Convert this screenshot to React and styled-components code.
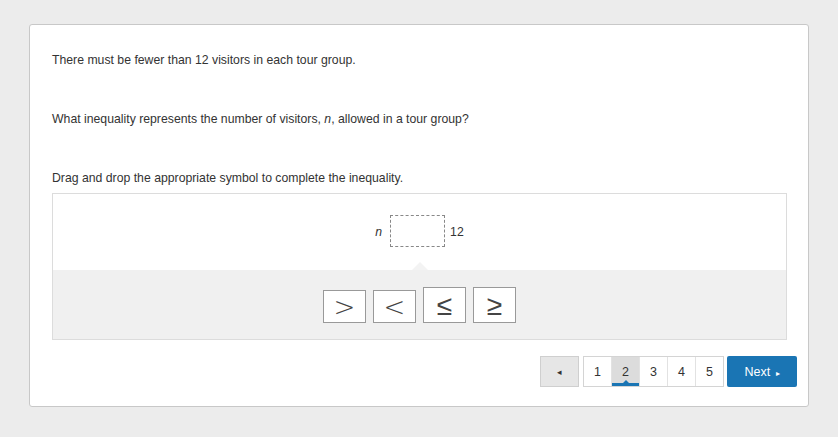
import React, { useState } from 'react';
import styled, { createGlobalStyle } from 'styled-components';

const GlobalStyle = createGlobalStyle`
  html, body {
    margin: 0;
    padding: 0;
    background: #ececec;
  }
  body {
    font-family: "Liberation Sans", Arial, sans-serif;
    color: #333;
  }
`;

const symbols = ['>', '<', '≤', '≥'];
const pages = [1, 2, 3, 4, 5];

const App = () => {
  const [page, setPage] = useState(2);

  return (
    <Page>
      <GlobalStyle />
      <Card>
        <Prompt>There must be fewer than 12 visitors in each tour group.</Prompt>
        <Prompt>
          What inequality represents the number of visitors, <em>n</em>, allowed in a tour group?
        </Prompt>
        <Prompt>Drag and drop the appropriate symbol to complete the inequality.</Prompt>

        <Widget>
          <Expression>
            <Var>n</Var>
            <DropZone />
            <Num>12</Num>
          </Expression>
          <Tray>
            {symbols.map((s) => (
              <Tile key={s} tall={s === '≤' || s === '≥'}>{s}</Tile>
            ))}
          </Tray>
        </Widget>

        <Pager>
          <PrevButton>◂</PrevButton>
          <PageList>
            {pages.map((p) => (
              <PageItem key={p} active={p === page} onClick={() => setPage(p)}>
                {p}
              </PageItem>
            ))}
          </PageList>
          <NextButton>Next <small>▸</small></NextButton>
        </Pager>
      </Card>
    </Page>
  );
};

// Styles
const Page = styled.div`
  padding: 24px 29px 30px 29px;
`;

const Card = styled.div`
  background: white;
  border: 1px solid #c8c8c8;
  border-radius: 3px;
  padding: 26px 11px 19px 22px;
  display: flex;
  flex-direction: column;
`;

const Prompt = styled.p`
  margin: 0 0 41px 0;
  font-size: 12.25px;
  line-height: 18px;
  color: #333;

  &:nth-of-type(3) {
    margin-bottom: 6px;
  }
`;

const Widget = styled.div`
  border: 1px solid #dcdcdc;
  margin-right: 10px;
  display: flex;
  flex-direction: column;
`;

const Expression = styled.div`
  height: 76px;
  display: flex;
  justify-content: center;
  align-items: flex-start;
  padding-top: 21px;
  box-sizing: border-box;
  gap: 5px;
  font-size: 12.25px;
  line-height: 35px;
  color: #333;
`;

const Var = styled.span`
  font-style: italic;
  margin-right: 3px;
`;

const Num = styled.span``;

const DropZone = styled.div`
  width: 53px;
  height: 30px;
  border: 1px dashed #888;
`;

const Tray = styled.div`
  position: relative;
  background: #f0f0f0;
  display: flex;
  justify-content: center;
  align-items: flex-end;
  gap: 7px;
  padding: 17px 0 16px 0;

  &::before {
    content: '';
    position: absolute;
    top: -8px;
    left: 50%;
    margin-left: -8px;
    border-left: 8px solid transparent;
    border-right: 8px solid transparent;
    border-bottom: 8px solid #f3f3f3;
  }
`;

const Tile = styled.div`
  width: 41px;
  height: ${(props) => (props.tall ? '34px' : '31px')};
  border: 1px solid #999;
  background: white;
  display: flex;
  justify-content: center;
  align-items: center;
  font-family: "DejaVu Sans", sans-serif;
  font-size: ${(props) => (props.tall ? '28px' : '26px')};
  font-weight: 200;
  color: #444;
  cursor: grab;
`;

const Pager = styled.div`
  display: flex;
  justify-content: flex-end;
  align-items: center;
  margin-top: 16px;
`;

const PrevButton = styled.button`
  width: 39px;
  height: 31px;
  margin-right: 4px;
  background: #e6e6e6;
  border: 1px solid #cfcfcf;
  color: #333;
  font-size: 9px;
  padding: 0;
`;

const PageList = styled.div`
  display: flex;
  border: 1px solid #d4d4d4;
  margin-right: 3px;
`;

const PageItem = styled.div`
  position: relative;
  box-sizing: border-box;
  width: 28px;
  height: 29px;
  display: flex;
  justify-content: center;
  align-items: center;
  font-size: 12.5px;
  color: #333;
  background: ${(props) => (props.active ? '#dcdcdc' : 'white')};
  border-left: 1px solid #e2e2e2;
  cursor: pointer;

  &:first-child {
    border-left: none;
    width: 27px;
  }

  &::after {
    content: '';
    display: ${(props) => (props.active ? 'block' : 'none')};
    position: absolute;
    left: 0;
    right: 0;
    bottom: 0;
    height: 3px;
    background: #1a75b4;
  }

  &::before {
    content: '';
    display: ${(props) => (props.active ? 'block' : 'none')};
    position: absolute;
    left: 50%;
    bottom: 3px;
    margin-left: -3px;
    border-left: 3px solid transparent;
    border-right: 3px solid transparent;
    border-bottom: 3px solid #1a75b4;
  }
`;

const NextButton = styled.button`
  width: 70px;
  height: 31px;
  background: #1a75b4;
  border: none;
  border-radius: 2px;
  color: white;
  font-family: "Liberation Sans", Arial, sans-serif;
  font-size: 12.5px;
  padding: 0;

  small {
    font-size: 8px;
    margin-left: 2px;
  }
`;

export default App;
